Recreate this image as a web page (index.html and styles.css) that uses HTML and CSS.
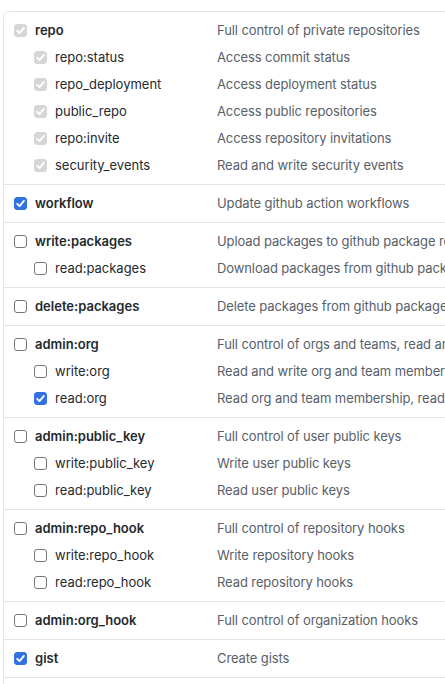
FILE: index.html
```html
<!DOCTYPE html>
<html>
<head>
<meta charset="utf-8">
<link rel="stylesheet" href="styles.css">
</head>
<body>
<div class="viewport">
  <div class="scopes">
    <div class="group">
      <div class="row top"><div class="name"><span class="cb disabled"><svg viewBox="0 0 13 13"><path d="M3.2 6.8 L5.5 9.1 L9.9 3.9"/></svg></span><span>repo</span></div><div class="desc">Full control of private repositories</div></div>
      <div class="row sub"><div class="name"><span class="cb disabled"><svg viewBox="0 0 13 13"><path d="M3.2 6.8 L5.5 9.1 L9.9 3.9"/></svg></span><span>repo:status</span></div><div class="desc">Access commit status</div></div>
      <div class="row sub"><div class="name"><span class="cb disabled"><svg viewBox="0 0 13 13"><path d="M3.2 6.8 L5.5 9.1 L9.9 3.9"/></svg></span><span>repo_deployment</span></div><div class="desc">Access deployment status</div></div>
      <div class="row sub"><div class="name"><span class="cb disabled"><svg viewBox="0 0 13 13"><path d="M3.2 6.8 L5.5 9.1 L9.9 3.9"/></svg></span><span>public_repo</span></div><div class="desc">Access public repositories</div></div>
      <div class="row sub"><div class="name"><span class="cb disabled"><svg viewBox="0 0 13 13"><path d="M3.2 6.8 L5.5 9.1 L9.9 3.9"/></svg></span><span>repo:invite</span></div><div class="desc">Access repository invitations</div></div>
      <div class="row sub"><div class="name"><span class="cb disabled"><svg viewBox="0 0 13 13"><path d="M3.2 6.8 L5.5 9.1 L9.9 3.9"/></svg></span><span>security_events</span></div><div class="desc">Read and write security events</div></div>
    </div>
    <div class="group">
      <div class="row top"><div class="name"><span class="cb checked"><svg viewBox="0 0 13 13"><path d="M3.2 6.8 L5.5 9.1 L9.9 3.9"/></svg></span><span>workflow</span></div><div class="desc">Update github action workflows</div></div>
    </div>
    <div class="group">
      <div class="row top"><div class="name"><span class="cb"></span><span>write:packages</span></div><div class="desc">Upload packages to github package registry</div></div>
      <div class="row sub"><div class="name"><span class="cb"></span><span>read:packages</span></div><div class="desc">Download packages from github package registry</div></div>
    </div>
    <div class="group">
      <div class="row top"><div class="name"><span class="cb"></span><span>delete:packages</span></div><div class="desc">Delete packages from github package registry</div></div>
    </div>
    <div class="group">
      <div class="row top"><div class="name"><span class="cb"></span><span>admin:org</span></div><div class="desc">Full control of orgs and teams, read and write org projects</div></div>
      <div class="row sub"><div class="name"><span class="cb"></span><span>write:org</span></div><div class="desc">Read and write org and team membership, read and write org projects</div></div>
      <div class="row sub"><div class="name"><span class="cb checked"><svg viewBox="0 0 13 13"><path d="M3.2 6.8 L5.5 9.1 L9.9 3.9"/></svg></span><span>read:org</span></div><div class="desc">Read org and team membership, read org projects</div></div>
    </div>
    <div class="group">
      <div class="row top"><div class="name"><span class="cb"></span><span>admin:public_key</span></div><div class="desc">Full control of user public keys</div></div>
      <div class="row sub"><div class="name"><span class="cb"></span><span>write:public_key</span></div><div class="desc">Write user public keys</div></div>
      <div class="row sub"><div class="name"><span class="cb"></span><span>read:public_key</span></div><div class="desc">Read user public keys</div></div>
    </div>
    <div class="group">
      <div class="row top"><div class="name"><span class="cb"></span><span>admin:repo_hook</span></div><div class="desc">Full control of repository hooks</div></div>
      <div class="row sub"><div class="name"><span class="cb"></span><span>write:repo_hook</span></div><div class="desc">Write repository hooks</div></div>
      <div class="row sub"><div class="name"><span class="cb"></span><span>read:repo_hook</span></div><div class="desc">Read repository hooks</div></div>
    </div>
    <div class="group">
      <div class="row top"><div class="name"><span class="cb"></span><span>admin:org_hook</span></div><div class="desc">Full control of organization hooks</div></div>
    </div>
    <div class="group">
      <div class="row top"><div class="name"><span class="cb checked"><svg viewBox="0 0 13 13"><path d="M3.2 6.8 L5.5 9.1 L9.9 3.9"/></svg></span><span>gist</span></div><div class="desc">Create gists</div></div>
    </div>
    <div class="group">
      <div class="row top"><div class="name"><span class="cb"></span><span>notifications</span></div><div class="desc">Access notifications</div></div>
    </div>
  </div>
</div>
</body>
</html>
```

FILE: styles.css
```css
html, body {
  margin: 0;
  padding: 0;
  background: #ffffff;
  overflow: hidden;
}
.viewport {
  width: 445px;
  height: 684px;
  overflow: hidden;
  padding: 11px 0 0 3px;
  box-sizing: border-box;
  font-family: Inter, "Liberation Sans", sans-serif;
  font-size: 13px;
  color: #24292e;
}
.scopes {
  width: 620px;
  border: 1px solid #e1e4e8;
  border-radius: 6px;
}
.group {
  padding: 5px 0;
  border-top: 1px solid #e1e4e8;
}
.group:first-child {
  border-top: none;
}
.row {
  display: grid;
  grid-template-columns: 213px 1fr;
  height: 27px;
  line-height: 27px;
  white-space: nowrap;
}
.name {
  display: flex;
  align-items: center;
  gap: 8px;
  padding-left: 10px;
}
.row.top .name {
  font-weight: 600;
}
.row.sub .name {
  padding-left: 30px;
}
.desc {
  color: #586069;
  letter-spacing: -0.1px;
}
.cb {
  width: 13px;
  height: 13px;
  box-sizing: border-box;
  border: 1px solid #767676;
  border-radius: 3px;
  background: #ffffff;
  display: inline-flex;
  flex: none;
}
.cb svg {
  width: 13px;
  height: 13px;
  margin: -1px;
  fill: none;
  stroke: #ffffff;
  stroke-width: 1.9;
  stroke-linecap: round;
  stroke-linejoin: round;
}
.cb.checked {
  background: #3271e0;
  border-color: #3271e0;
}
.cb.disabled {
  background: #d6d6d6;
  border-color: #d6d6d6;
}
```
